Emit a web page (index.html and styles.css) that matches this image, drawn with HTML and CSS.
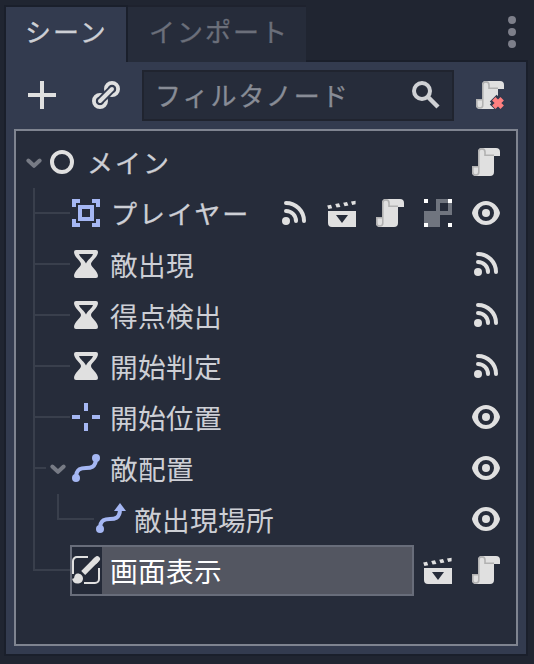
FILE: index.html
```html
<!DOCTYPE html>
<html lang="ja">
<head>
<meta charset="utf-8">
<title>シーン</title>
<link rel="stylesheet" href="styles.css">
</head>
<body>
<svg class="defs" width="0" height="0">
  <symbol id="script" viewBox="0 0 16 16"><path fill="#e0e0e0" d="M6 1a2 2 0 0 0-2 2v7H1v3a2 2 0 0 0 2 2h7a2 2 0 0 0 2-2V5h3V3a2 2 0 0 0-2-2z"/><path fill="none" stroke="#b2b2b2" stroke-width=".8" d="M12 4.6H7.5V3a1.55 1.55 0 0 0-3.1 0v10a1.5 1.5 0 0 1-3 0v-2.6h3"/></symbol>
  <symbol id="signal" viewBox="0 0 16 16"><circle cx="4" cy="12" r="2" fill="#e0e0e0"/><path fill="none" stroke="#e0e0e0" stroke-width="2" stroke-linecap="round" d="M4 3a9 9 0 0 1 9 9M4 7a5 5 0 0 1 5 5"/></symbol>
  <symbol id="eye" viewBox="0 0 16 16"><path fill="#e0e0e0" fill-rule="evenodd" d="M8 2C4.6 2 2 4.5 1.1 7.5a1.6 1.6 0 0 0 0 1C2 11.500 4.600 14 8 14s6-2.500 6.900-5.500a1.600 1.600 0 0 0 0-1C14 4.500 11.400 2 8 2zm0 2a4 4 0 0 1 0 8 4 4 0 0 1 0-8z"/><circle cx="8" cy="8" r="2" fill="#e0e0e0"/></symbol>
  <symbol id="clapper" viewBox="0 0 16 16"><path fill="#e0e0e0" fill-rule="evenodd" d="M1 7h14v8H3a2 2 0 0 1-2-2zm4 2 3 4 3-4zM.6 4.200l1.900-.35.6 1.800-1.900.35zM4.600 3.500l1.900-.35.7 1.800-1.900.35zM8.600 2.850l1.900-.35.7 1.800-1.900.35zM12.500 2.300l2.300-.4V3.600l-1.700.4z"/></symbol>
  <symbol id="timer" viewBox="0 0 16 16"><path fill="#e0e0e0" fill-rule="evenodd" d="M3 1h10a1 1 0 0 1 1 1c0 2.500-3.500 4.500-3.500 6s3.500 3.500 3.500 6a1 1 0 0 1-1 1H3a1 1 0 0 1-1-1c0-2.500 3.500-4.500 3.500-6S2 4.500 2 2a1 1 0 0 1 1-1zm1.500 2C5 4.700 7.300 6 8 7.700 8.700 6 11 4.700 11.500 3z"/></symbol>
  <symbol id="arrow" viewBox="0 0 24 24"><path fill="none" stroke="#777b85" stroke-width="4" stroke-linecap="round" stroke-linejoin="round" d="m6.300 9.500 5.700 5.300 5.700-5.300"/></symbol>
</svg>
<div class="dock">
  <header class="tabs">
    <div class="tab active kana">シーン</div>
    <div class="tab kana">インポート</div>
    <svg class="dots" viewBox="0 0 8 32"><circle cx="4" cy="4" r="4"/><circle cx="4" cy="16" r="4"/><circle cx="4" cy="28" r="4"/></svg>
  </header>
  <main class="panel">
    <div class="toolbar">
      <svg class="icon" viewBox="0 0 16 16"><path fill="#e0e0e0" d="M7 1h2v6h6v2H9v6H7V9H1V7h6z"/></svg>
      <svg class="icon link" viewBox="0 0 16 16" fill="none"><g stroke="#e0e0e0" stroke-width="2"><circle cx="11" cy="5" r="3"/><circle cx="5" cy="11" r="3"/></g><g stroke-linecap="round"><path stroke="#333b4f" stroke-width="4" d="m5 11 6-6"/><path stroke="#e0e0e0" stroke-width="2" d="m5 11 6-6"/></g></svg>
      <div class="filter"><span class="kana">フィルタノード</span><svg class="icon" viewBox="0 0 16 16" fill="none" stroke="#cfd1d5" stroke-width="2"><circle cx="6" cy="6" r="4"/><path stroke-width="2.200" d="m9 9 5 5"/></svg></div>
      <svg class="icon" viewBox="0 0 16 16"><use href="#script"/><path stroke="#333b4f" stroke-width="4.800" d="m9.600 9.600 4.800 4.800m0-4.800-4.800 4.800"/><path stroke="#ff8080" stroke-width="2.400" d="m9.900 9.900 4.200 4.200m0-4.200-4.200 4.200"/></svg>
    </div>
    <div class="tree">
      <div class="row root"><svg class="fold"><use href="#arrow"/></svg><svg class="icon" viewBox="0 0 16 16"><circle cx="8" cy="8" r="5" fill="none" stroke="#e0e0e0" stroke-width="2"/></svg><span class="name kana">メイン</span><div class="actions"><svg class="icon"><use href="#script"/></svg></div></div>
      <div class="row"><i class="guide"></i><svg class="icon" viewBox="0 0 16 16"><path fill="#a5b7f3" fill-rule="evenodd" d="M1 1h4v2H3v2H1zM11 1h4v4h-2V3h-2zM1 11h2v2h2v2H1zM13 11h2v4h-4v-2h2zM4 4h8v8H4zm2 2v4h4V6z"/></svg><span class="name kana">プレイヤー</span><div class="actions"><svg class="icon"><use href="#signal"/></svg><svg class="icon"><use href="#clapper"/></svg><svg class="icon"><use href="#script"/></svg><svg class="icon" viewBox="0 0 16 16"><path fill="#70757f" fill-rule="evenodd" d="M7 1h8v8H9v6H1V7h6zm2 2v4h4V3z"/><path fill="#fff" d="M1 1h2v2H1zM13 1h2v2h-2zM1 13h2v2H1zM13 13h2v2h-2z"/></svg><svg class="icon"><use href="#eye"/></svg></div></div>
      <div class="row"><i class="guide"></i><svg class="icon"><use href="#timer"/></svg><span class="name">敵出現</span><div class="actions"><svg class="icon"><use href="#signal"/></svg></div></div>
      <div class="row"><i class="guide"></i><svg class="icon"><use href="#timer"/></svg><span class="name">得点検出</span><div class="actions"><svg class="icon"><use href="#signal"/></svg></div></div>
      <div class="row"><i class="guide"></i><svg class="icon"><use href="#timer"/></svg><span class="name">開始判定</span><div class="actions"><svg class="icon"><use href="#signal"/></svg></div></div>
      <div class="row"><i class="guide"></i><svg class="icon" viewBox="0 0 16 16"><path fill="#a5b7f3" d="M7 1h2v4H7zM7 11h2v4H7zM1 7h4v2H1zM11 7h4v2h-4z"/></svg><span class="name">開始位置</span><div class="actions"><svg class="icon"><use href="#eye"/></svg></div></div>
      <div class="row"><i class="guide short"></i><svg class="fold"><use href="#arrow"/></svg><svg class="icon" viewBox="0 0 16 16"><g fill="#a5b7f3"><circle cx="3" cy="13" r="2"/><circle cx="13" cy="3" r="2"/></g><path fill="none" stroke="#a5b7f3" stroke-width="2" d="M3 13c0-5 3-5 5-5s5 0 5-5"/></svg><span class="name">敵配置</span><div class="actions"><svg class="icon"><use href="#eye"/></svg></div></div>
      <div class="row"><i class="guide pass"></i><i class="guide last"></i><svg class="icon" viewBox="0 0 16 16"><g fill="#a5b7f3"><circle cx="3" cy="13" r="2"/><path d="m13 0 3 4h-6z"/></g><path fill="none" stroke="#a5b7f3" stroke-width="2" d="M3 13c0-5 3-5 5-5s5 0 5-5"/></svg><span class="name">敵出現場所</span><div class="actions"><svg class="icon"><use href="#eye"/></svg></div></div>
      <div class="row"><i class="guide last"></i><div class="selected"><div class="thumb"><svg class="icon" viewBox="0 0 16 16"><g fill="none" stroke="#e0e0e0"><path d="M1.500 10V3.500a2 2 0 0 1 2-2H9M14.500 7v5.500a2 2 0 0 1-2 2H7"/><path stroke-width="2.800" stroke-linecap="round" d="m13.600 2.500-1.100 1.100"/><path stroke-width="2.800" d="m13.300 2.800-6.700 6.700"/></g><path fill="#e0e0e0" d="M3.800 9.700c1.600 0 2.700 1.100 2.700 2.500s-1.200 2.600-2.800 2.600S1.300 13.800 1 12.300c.8.3 1.100-.2 1.200-1 .1-.9.700-1.600 1.600-1.600z"/></svg></div><span class="name">画面表示</span></div><div class="actions"><svg class="icon"><use href="#clapper"/></svg><svg class="icon"><use href="#script"/></svg></div></div>
    </div>
  </main>
</div>
</body>
</html>
```
FILE: styles.css
```css
* { box-sizing: border-box; }
body {
  margin: 0;
  background: #202531;
  color: #cdcfd5;
  font: 27.700px/40px "Noto Sans CJK JP", sans-serif;
  font-weight: 400;
  letter-spacing: .3px;
}
.kana {
  font-size: 26px;
  letter-spacing: 2px;
  text-indent: 1px;
  -webkit-text-stroke: .3px currentColor;
}
.defs { display: block; height: 0; }
.icon { display: block; width: 32px; height: 32px; flex: none; }
.dock { height: 664px; padding: 5px 6px 8px 4px; }
.tabs { display: flex; height: 57px; position: relative; z-index: 1; }
.tab {
  width: 178px;
  height: 57px;
  border-top: 2px solid #1e222e;
  background: #262c3a;
  color: #6b6f7a;
  padding: 4px 0 0 20px;
}
.tab.active {
  width: 124px;
  border: 2px solid #1a1f2b;
  border-bottom: 0;
  background: #333b4f;
  color: #cdcfd5;
  padding-left: 18px;
}
.dots { width: 8px; height: 32px; margin: 11px 12px 0 auto; fill: #7d7f8a; }
.panel {
  width: 524px;
  height: 596px;
  margin-top: -2px;
  border: 2px solid #1a1f2b;
  background: #333b4f;
  padding: 8px;
}
.toolbar { display: flex; align-items: flex-start; height: 51px; padding-left: 12px; }
.toolbar > .icon { margin-top: 9px; }
.toolbar > .link { margin: 9px 20px 0 32px; }
.filter {
  display: flex;
  justify-content: space-between;
  align-items: flex-start;
  width: 312px;
  height: 51px;
  margin-right: 20px;
  padding: 3px 10px 0;
  border: 2px solid #20242f;
  background: #262c3a;
  color: #888c96;
}
.filter .icon { margin-top: 4px; }
.tree {
  width: 504px;
  height: 517px;
  margin-top: 8px;
  border: 2px solid #7f8490;
  background: #262c3a;
  padding: 6px 14px 0 17px;
}
.row { display: flex; height: 51px; }
.row > .icon, .actions { margin-top: 9px; }
.row.root { margin-left: -11px; }
.fold { width: 24px; height: 24px; margin-top: 14px; flex: none; }
.name { margin: 5px 0 0 8px; white-space: nowrap; }
.actions { display: flex; gap: 16px; margin-left: auto; }
.guide {
  width: 37px;
  height: 51px;
  flex: none;
  border-left: 2px solid #393f4c;
  background: linear-gradient(#393f4c, #393f4c) 0 24px / 100% 2px no-repeat;
}
.guide.short { width: 13px; }
.guide.pass { width: 24px; background: none; }
.guide.last { height: 26px; }
.selected {
  display: flex;
  width: 344px;
  height: 51px;
  border: 2px solid #686d7a;
  background: #535661;
  color: #fff;
}
.thumb { width: 30px; height: 47px; padding-top: 7px; background: #242a38; }
.thumb .icon { margin-left: -2px; }
.selected .name { margin-top: 3px; }
```
